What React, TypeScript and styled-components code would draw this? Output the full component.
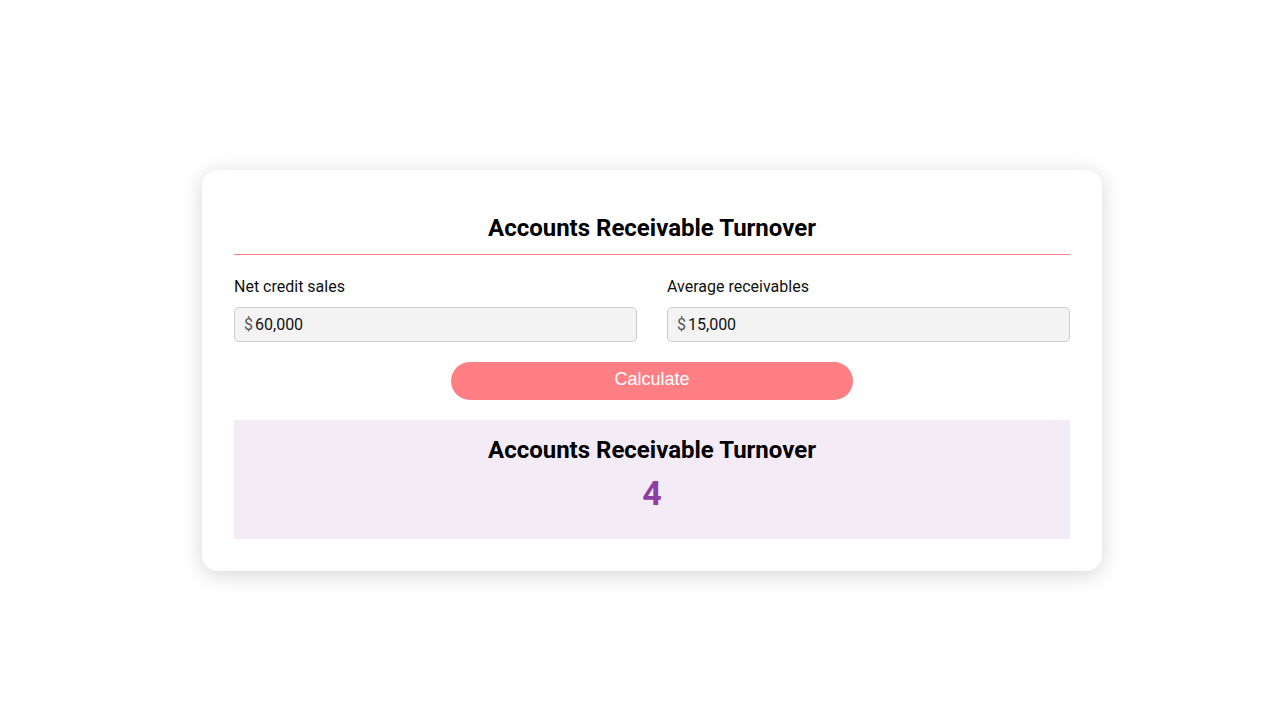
import styled, { createGlobalStyle } from "styled-components";

const GlobalStyle = createGlobalStyle`
    * { box-sizing: border-box; }
    body {
        margin: 0;
        background: #ffffff;
        font-family: Roboto, "Liberation Sans", Arial, sans-serif;
        color: #111;
    }
`

interface FieldProps {
    label: string;
    value: string;
}

function Field({label, value}: FieldProps){
    return (
        <FieldArea>
            <FieldLabel>{label}</FieldLabel>
            <InputBox>
                <Currency>$</Currency>
                <ValueInput defaultValue={value}/>
            </InputBox>
        </FieldArea>
    )
}

function App(){
    return (
        <Page>
            <GlobalStyle/>
            <Card>
                <Title>Accounts Receivable Turnover</Title>
                <Divider/>
                <Fields>
                    <Field label="Net credit sales" value="60,000"/>
                    <Field label="Average receivables" value="15,000"/>
                </Fields>
                <ButtonRow>
                    <CalcButton>Calculate</CalcButton>
                </ButtonRow>
                <Result>
                    <ResultTitle>Accounts Receivable Turnover</ResultTitle>
                    <ResultValue>4</ResultValue>
                </Result>
            </Card>
        </Page>
    )
}

const Page = styled.div`
    min-height: 100vh;
    display: flex;
    justify-content: center;
    align-items: center;
    padding: 20px 0 0 24px;
`
const Card = styled.div`
    width: 900px;
    background: #ffffff;
    border-radius: 16px;
    box-shadow: 0 4px 22px rgba(0, 0, 0, 0.16);
    padding: 44px 32px 32px;
`
const Title = styled.h1`
    margin: 0;
    text-align: center;
    font-size: 24px;
    line-height: 28px;
    font-weight: 700;
    color: #000;
`
const Divider = styled.div`
    height: 1px;
    background: #ff7f84;
    margin-top: 12px;
`
const Fields = styled.div`
    display: grid;
    grid-template-columns: 1fr 1fr;
    column-gap: 30px;
    margin-top: 22px;
`
const FieldArea = styled.div`
    display: flex;
    flex-direction: column;
`
const FieldLabel = styled.label`
    font-size: 16px;
    line-height: 19px;
    color: #111;
    margin-bottom: 11px;
`
const InputBox = styled.div`
    display: flex;
    align-items: center;
    height: 35px;
    background: #f3f3f3;
    border: 1px solid #cccccc;
    border-radius: 5px;
    padding: 0 9px;
`
const Currency = styled.span`
    font-size: 16px;
    color: #555;
    margin-right: 2px;
`
const ValueInput = styled.input`
    flex: 1;
    border: none;
    outline: none;
    background: transparent;
    padding: 0;
    font-family: Roboto, "Liberation Sans", Arial, sans-serif;
    font-size: 16px;
    color: #111;
`
const ButtonRow = styled.div`
    display: flex;
    justify-content: center;
    margin-top: 20px;
`
const CalcButton = styled.button`
    width: 402px;
    height: 38px;
    border: none;
    border-radius: 19px;
    background: #ff7f84;
    color: #ffffff;
    font-family: "Liberation Sans", Arial, sans-serif;
    font-size: 18px;
    padding: 0 0 2px;
    cursor: pointer;
`
const Result = styled.div`
    margin-top: 20px;
    background: #f3ebf5;
    padding: 16px 0 26px;
    display: flex;
    flex-direction: column;
    align-items: center;
`
const ResultTitle = styled.h2`
    margin: 0;
    font-size: 24px;
    line-height: 28px;
    font-weight: 700;
    color: #000;
`
const ResultValue = styled.div`
    margin-top: 9px;
    font-size: 34px;
    line-height: 40px;
    font-weight: 700;
    color: #8e3fa0;
`

export default App
